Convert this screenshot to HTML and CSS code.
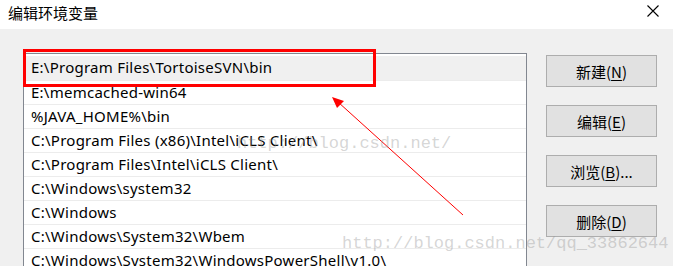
FILE: index.html
```html
<!DOCTYPE html>
<html lang="zh-CN">
<head>
    <meta charset="UTF-8">
    <title>编辑环境变量</title>
    <link rel="stylesheet" href="styles.css">
</head>
<body>
<div class="dialog">
    <div class="titlebar">
        <span class="title">编辑环境变量</span>
        <svg class="close" width="12" height="12" viewBox="0 0 12 12">
            <path d="M0.5 0.5 L11.5 11.5 M11.5 0.5 L0.5 11.5" stroke="#000" stroke-width="1.1" fill="none"/>
        </svg>
    </div>

    <div class="content">
        <ul class="pathlist">
            <li class="selected">E:\Program Files\TortoiseSVN\bin</li>
            <li>E:\memcached-win64</li>
            <li>%JAVA_HOME%\bin</li>
            <li>C:\Program Files (x86)\Intel\iCLS Client\</li>
            <li>C:\Program Files\Intel\iCLS Client\</li>
            <li>C:\Windows\system32</li>
            <li>C:\Windows</li>
            <li>C:\Windows\System32\Wbem</li>
            <li>C:\Windows\System32\WindowsPowerShell\v1.0\</li>
        </ul>

        <div class="buttons">
            <button>新建(<u>N</u>)</button>
            <button>编辑(<u>E</u>)</button>
            <button>浏览(<u>B</u>)...</button>
            <button>删除(<u>D</u>)</button>
        </div>
    </div>

    <!-- annotations drawn over the screenshot -->
    <div class="mark"></div>
    <svg class="arrow" width="673" height="266" viewBox="0 0 673 266">
        <line x1="463" y1="215" x2="338" y2="102" stroke="#ff0000" stroke-width="1"/>
        <polygon points="332,97 344,101 337,108" fill="#ff0000"/>
    </svg>
    <div class="watermark wm1">http://blog.csdn.net/</div>
    <div class="watermark wm2">http://blog.csdn.net/qq_33862644</div>
</div>
</body>
</html>
```

FILE: styles.css
```css
body { margin: 0; font-family: "Noto Sans", "Noto Sans CJK SC", sans-serif; }
.dialog { position: relative; width: 673px; height: 266px; overflow: hidden; background: #f0f0f0; }

.titlebar { height: 29px; background: #fff; display: flex; align-items: center; justify-content: space-between; padding: 0 14px 4px 8px; box-sizing: border-box; }
.title { font-family: "Noto Sans CJK SC", sans-serif; font-size: 15px; color: #000; }
.close { margin-bottom: 4px; }

.content { display: flex; align-items: flex-start; }

.pathlist { list-style: none; margin: 24px 0 0 23px; padding: 2px 0 0 0; width: 502px; height: 300px; background: #fff; border: 1px solid #828790; }
.pathlist li { height: 24px; line-height: 23px; padding-left: 7px; font-size: 15px; letter-spacing: 0.25px; color: #000; border-bottom: 1px solid #ececec; box-sizing: border-box; white-space: nowrap; }
.pathlist li.selected { background: #f0f0f0; height: 25px; }

.buttons { display: flex; flex-direction: column; gap: 18px; margin: 26px 0 0 19px; }
.buttons button { width: 111px; height: 32px; background: #e1e1e1; border: 1px solid #adadad; font-family: "Noto Sans CJK SC", sans-serif; font-size: 15px; color: #000; padding: 0; }
.buttons u { text-decoration-thickness: 1px; text-underline-offset: 2px; }

.mark { position: absolute; left: 23px; top: 49px; width: 347px; height: 32px; border: 3px solid #ff0000; }
.arrow { position: absolute; left: 0; top: 0; }

.watermark { position: absolute; font-family: "Liberation Mono", monospace; font-size: 17px; color: rgba(150, 150, 150, 0.4); white-space: nowrap; }
.wm1 { left: 237px; top: 134px; }
.wm2 { left: 342px; top: 234px; }
```
